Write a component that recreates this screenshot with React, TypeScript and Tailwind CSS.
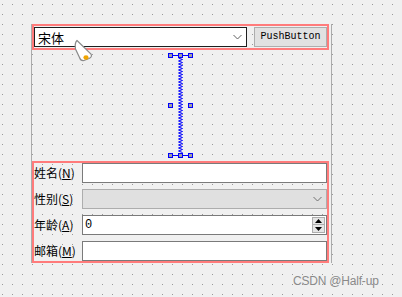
import type { ReactNode } from "react";

const red = "border-[#ff7b7b]";

function Chevron({ color = "#606060" }: { color?: string }) {
  return (
    <svg width="9" height="6" viewBox="0 0 9 6">
      <path d="M0.5 1 L4.5 5 L8.5 1" fill="none" stroke={color} strokeWidth="1" />
    </svg>
  );
}

function Spacer() {
  // vertical spring drawn by designer, with its 8 selection handles
  const zig: string[] = [];
  for (let y = 8; y <= 103; y += 1.5) {
    zig.push(`${zig.length % 2 === 0 ? 13.5 : 17.5},${y}`);
  }
  const handles = [
    [3, 3], [13, 3], [23, 3],
    [3, 53], [23, 53],
    [3, 103], [13, 103], [23, 103],
  ];
  return (
    <svg width="31" height="111" viewBox="0 0 31 111">
      <line x1="8" y1="5.5" x2="23" y2="5.5" stroke="#0000ff" />
      <line x1="8" y1="105.5" x2="23" y2="105.5" stroke="#0000ff" />
      <polyline points={zig.join(" ")} fill="none" stroke="#0000ff" strokeWidth="1" />
      {handles.map(([x, y], i) => (
        <rect key={i} x={x + 0.5} y={y + 0.5} width="4" height="4" fill="#a0a0a0" stroke="#0000ff" strokeWidth="1" />
      ))}
    </svg>
  );
}

function Row({ label, mn, children }: { label: string; mn: string; children: ReactNode }) {
  return (
    <div className="flex h-[20px] items-center">
      <div className="w-[48px] text-[12px] leading-none text-black">
        {label}(<span className="underline">{mn}</span>)
      </div>
      {children}
    </div>
  );
}

export default function App() {
  return (
    <div className="relative h-[297px] w-[402px] overflow-hidden bg-[#f0f0f0] bg-[image:radial-gradient(circle_at_0.5px_0.5px,#999_0.7px,transparent_0.7px)] bg-[length:10px_10px] bg-size-[10px_10px] bg-[position:2px_4px] bg-position-[2px_4px] pl-[31px] pt-[24px] font-['Noto_Sans_CJK_SC','Noto_Sans',sans-serif]">
      <div className="flex h-[239px] w-[301px] flex-col border-x border-[#ababab]">
        {/* horizontal layout */}
        <div className={`flex h-[26px] w-[297px] items-start gap-[7px] border-2 ${red} pt-px`}>
          <div className="flex h-[20px] w-[213px] items-center justify-between border border-[#1e1e1e] bg-white pl-[3px] pr-[4px]">
            <span className="text-[13px] leading-none text-black">宋体</span>
            <Chevron />
          </div>
          <div className="flex h-[20px] w-[73px] items-center justify-center border border-[#adadad] bg-[#e1e1e1] font-['Liberation_Mono',monospace] text-[10px] leading-none text-black">
            PushButton
          </div>
        </div>

        <div className="flex h-[111px] w-[297px] justify-center">
          <Spacer />
        </div>

        {/* form layout */}
        <div className={`flex h-[102px] w-[297px] flex-col gap-[6px] border-2 ${red}`}>
          <Row label="姓名" mn="N">
            <div className="h-[20px] w-[245px] border border-[#7a7a7a] bg-white" />
          </Row>
          <Row label="性别" mn="S">
            <div className="flex h-[20px] w-[245px] items-center justify-end border border-[#adadad] bg-[#e0e0e0] pr-[4px]">
              <Chevron color="#707070" />
            </div>
          </Row>
          <Row label="年龄" mn="A">
            <div className="flex h-[20px] w-[245px] items-center justify-between border border-[#7a7a7a] bg-white pl-[2px] pr-px">
              <span className="font-['Liberation_Mono',monospace] text-[12px] leading-none text-black">0</span>
              <div className="flex flex-col">
                <div className="flex h-[8px] w-[13px] items-center justify-center border border-[#adadad] bg-[#e5e5e5]">
                  <svg width="7" height="4" viewBox="0 0 7 4"><path d="M3.5 0 L7 4 L0 4 Z" fill="#000" /></svg>
                </div>
                <div className="flex h-[8px] w-[13px] items-center justify-center border border-t-0 border-[#adadad] bg-[#e5e5e5]">
                  <svg width="7" height="4" viewBox="0 0 7 4"><path d="M0 0 L7 0 L3.5 4 Z" fill="#000" /></svg>
                </div>
              </div>
            </div>
          </Row>
          <Row label="邮箱" mn="M">
            <div className="h-[20px] w-[245px] border border-[#7a7a7a] bg-white" />
          </Row>
        </div>
      </div>

      {/* mouse cursor over the canvas */}
      <svg className="absolute left-[73px] top-[39px]" width="22" height="24" viewBox="0 0 22 24">
        <path d="M4 1.5 L18 15 Q19.5 18 16 19.5 L11 21.5 Q7.5 22 6.5 18.5 L2.5 10 Q1.5 4 4 1.5 Z" fill="#fff" stroke="#8a8a8a" strokeWidth="1.2" />
        <ellipse cx="13" cy="18.5" rx="2.6" ry="2.2" fill="#f0a500" />
      </svg>

      <div className="absolute left-[293px] top-[275px] font-['Liberation_Sans',sans-serif] text-[12px] leading-none tracking-[-0.2px] text-[#8a8a8a]">
        CSDN @Half-up
      </div>
    </div>
  );
}
